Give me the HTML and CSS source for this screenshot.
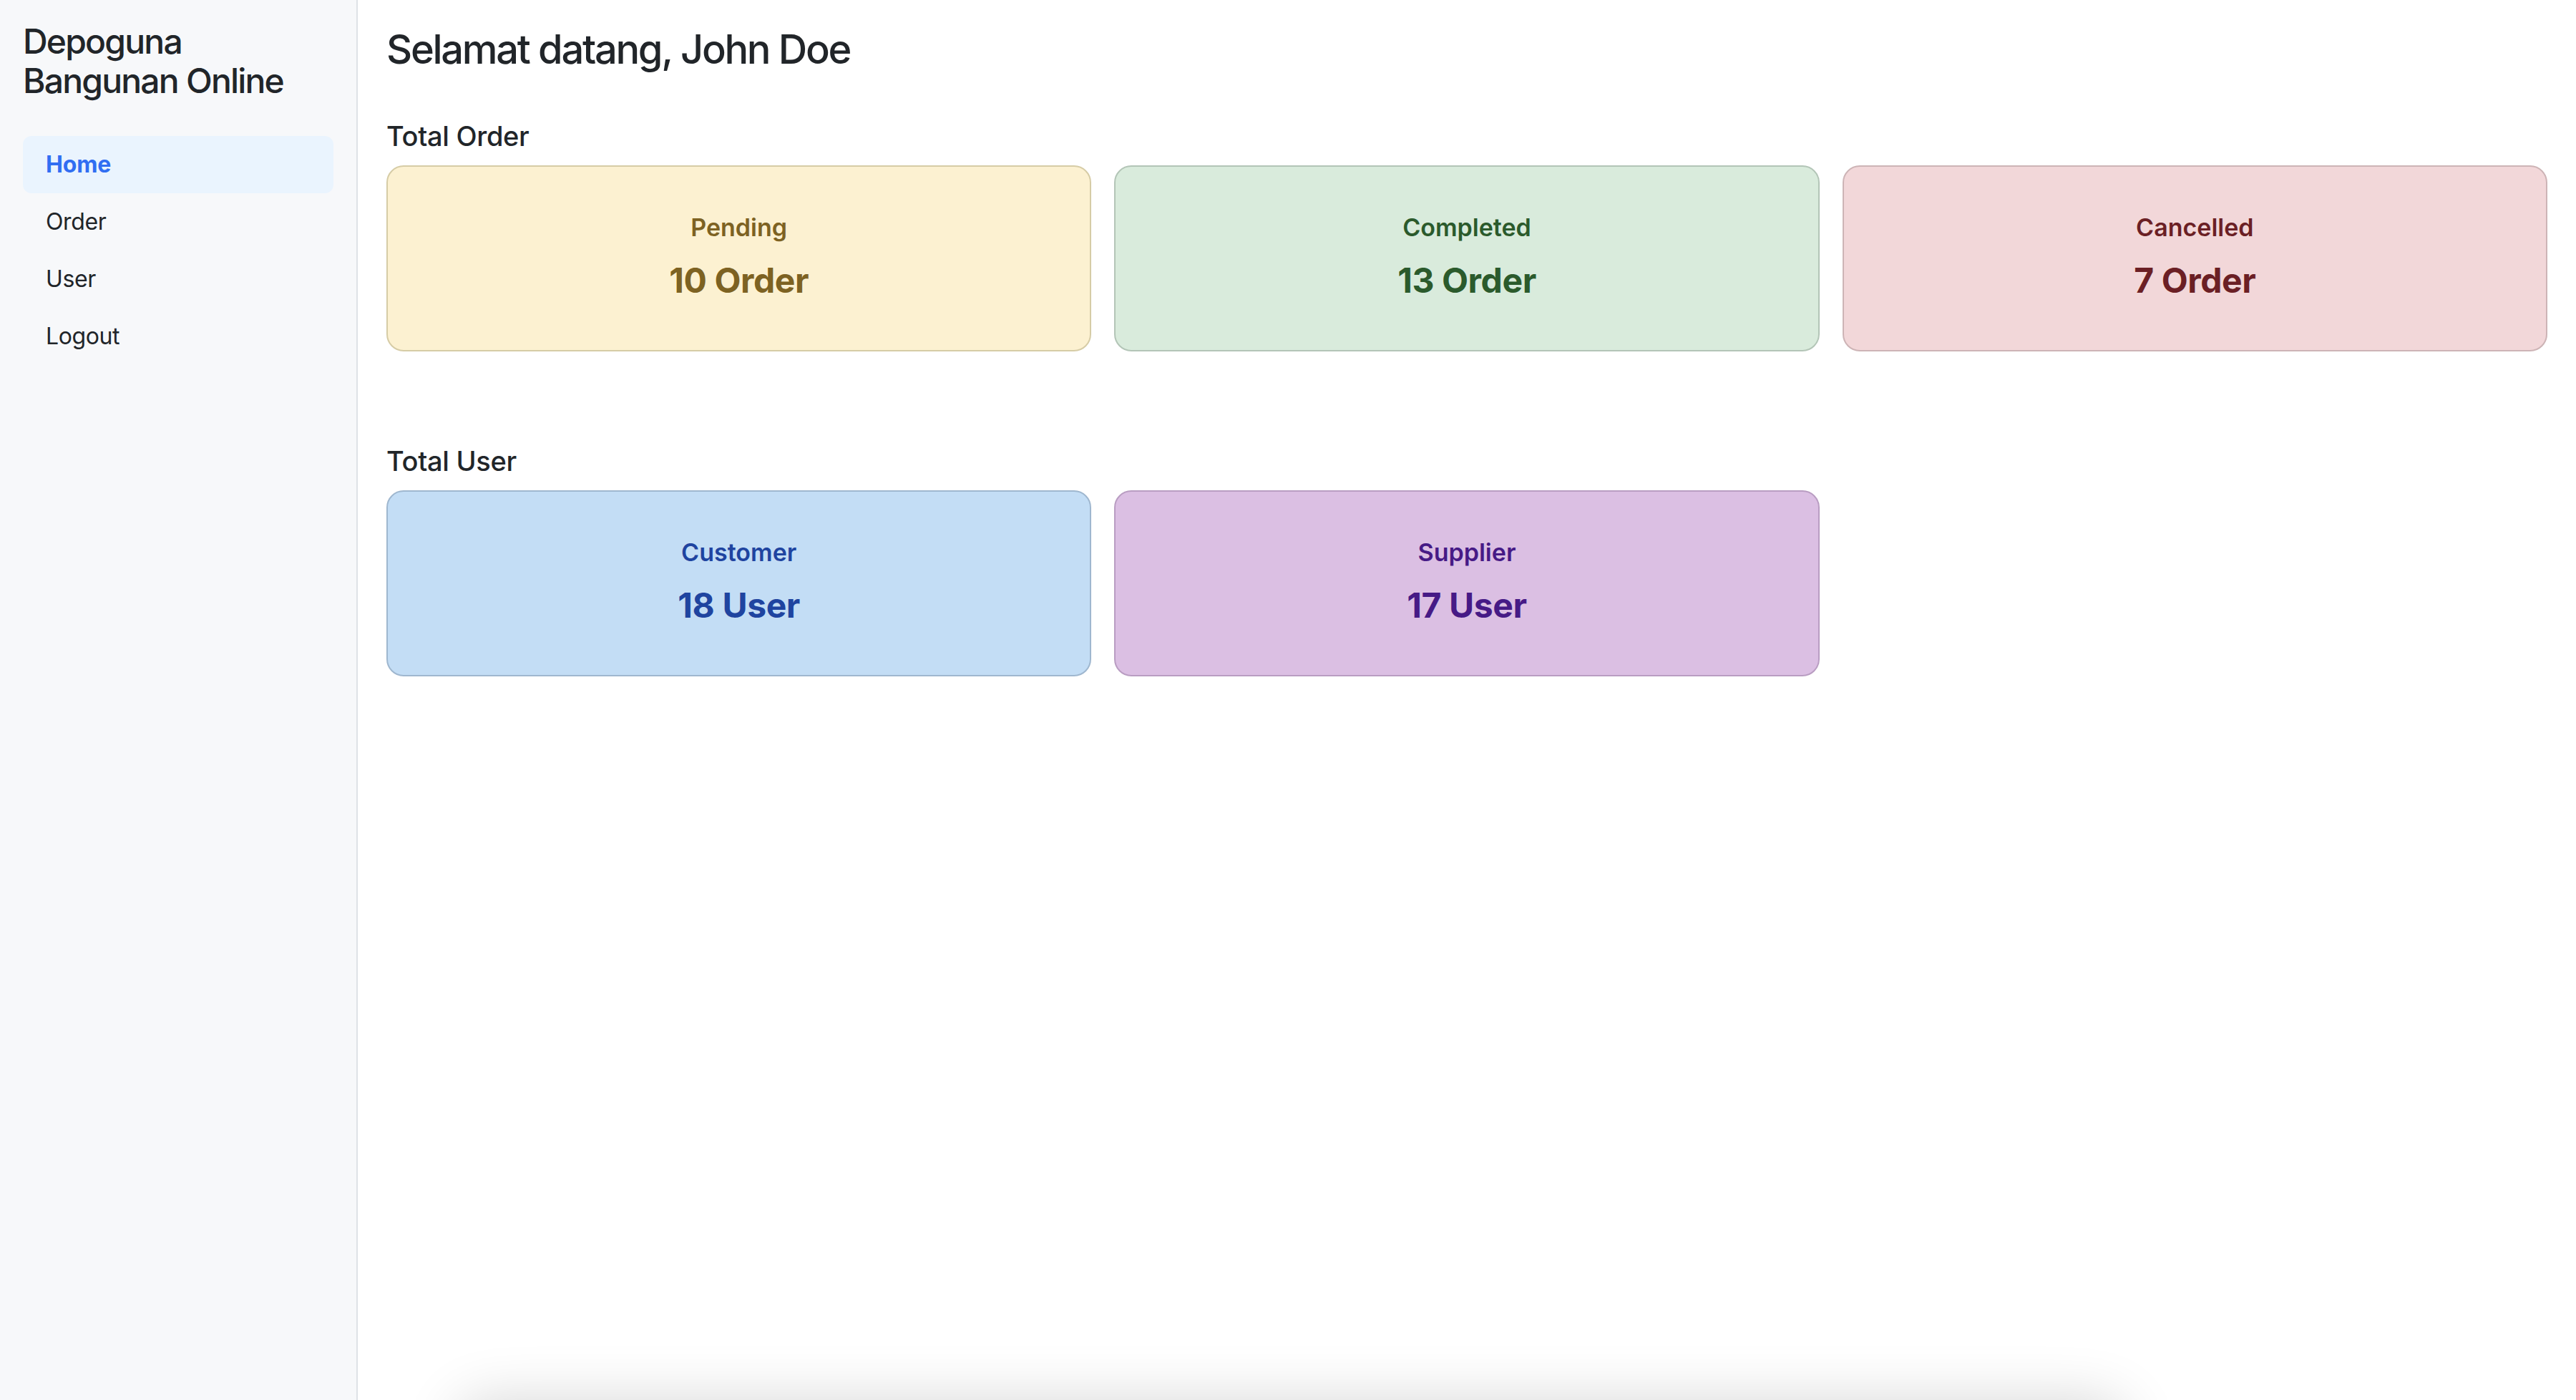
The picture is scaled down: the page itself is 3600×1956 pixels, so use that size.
FILE: index.html
```html
<!DOCTYPE html>
<html lang="id">
<head>
<meta charset="utf-8">
<title>Depoguna Bangunan Online</title>
<link rel="stylesheet" href="styles.css">
</head>
<body>
<div class="layout">
  <aside class="sidebar">
    <h4 class="brand">Depoguna<br>Bangunan Online</h4>
    <nav class="nav">
      <a class="nav-link active" href="#">Home</a>
      <a class="nav-link" href="#">Order</a>
      <a class="nav-link" href="#">User</a>
      <a class="nav-link" href="#">Logout</a>
    </nav>
  </aside>
  <main class="main">
    <h1 class="welcome">Selamat datang, John Doe</h1>

    <section class="section">
      <h5 class="section-title">Total Order</h5>
      <div class="cards">
        <div class="stat stat-warning">
          <div class="stat-label">Pending</div>
          <div class="stat-value">10 Order</div>
        </div>
        <div class="stat stat-success">
          <div class="stat-label">Completed</div>
          <div class="stat-value">13 Order</div>
        </div>
        <div class="stat stat-danger">
          <div class="stat-label">Cancelled</div>
          <div class="stat-value">7 Order</div>
        </div>
      </div>
    </section>

    <section class="section section-users">
      <h5 class="section-title">Total User</h5>
      <div class="cards">
        <div class="stat stat-primary">
          <div class="stat-label">Customer</div>
          <div class="stat-value">18 User</div>
        </div>
        <div class="stat stat-purple">
          <div class="stat-label">Supplier</div>
          <div class="stat-value">17 User</div>
        </div>
      </div>
    </section>
  </main>
</div>
<div class="bottom-sheet"></div>
</body>
</html>
```
FILE: styles.css
```css
* { box-sizing: border-box; }

html, body {
  margin: 0;
  padding: 0;
  height: 100%;
}

body {
  font-family: Inter, "Noto Sans", "Liberation Sans", sans-serif;
  color: #212529;
  background: #ffffff;
  overflow: hidden;
}

.layout {
  display: flex;
  min-height: 100vh;
}

.sidebar {
  width: 500px;
  flex: 0 0 500px;
  background: #f7f8fa;
  border-right: 2px solid #dee2e6;
  padding: 30px 32px;
}

.brand {
  margin: 0 0 50px 0;
  font-size: 48px;
  line-height: 55px;
  font-weight: 500;
  letter-spacing: -1.8px;
  color: #212529;
}

.nav {
  display: flex;
  flex-direction: column;
}

.nav-link {
  display: block;
  height: 80px;
  line-height: 48px;
  padding: 16px 32px;
  font-size: 32px;
  letter-spacing: -0.4px;
  color: #212529;
  text-decoration: none;
  border-radius: 12px;
}

.nav-link.active {
  background: #eaf4fe;
  color: #316ef2;
  font-weight: 700;
  letter-spacing: -0.2px;
}

.main {
  flex: 1;
  padding: 36px 40px;
}

.welcome {
  margin: 0 0 64px 0;
  font-size: 56px;
  line-height: 67px;
  font-weight: 500;
  letter-spacing: -2.3px;
}

.section-title {
  margin: 0 0 18px 0;
  font-size: 38px;
  line-height: 46px;
  font-weight: 500;
  letter-spacing: -0.3px;
}

.section-users {
  margin-top: 130px;
}

.cards {
  display: grid;
  grid-template-columns: repeat(3, 1fr);
  gap: 32px;
}

.stat {
  border: 2px solid;
  border-radius: 24px;
  padding: 61px 16px 69px;
  text-align: center;
}

.stat-label {
  font-size: 34px;
  line-height: 48px;
  font-weight: 600;
  margin-bottom: 21px;
}

.stat-value {
  font-size: 48px;
  line-height: 57px;
  font-weight: 700;
  letter-spacing: -0.4px;
}

.stat-warning { background: #fcf1d1; border-color: #d6cca6; color: #7d6222; }
.stat-success { background: #d9ebdc; border-color: #b3c5b7; color: #2b5a2c; }
.stat-danger  { background: #f2d7d9; border-color: #cdb4b6; color: #6b1f25; }
.stat-primary { background: #c3ddf5; border-color: #9fb7cf; color: #1f44a0; }
.stat-purple  { background: #dbbfe3; border-color: #b99dc2; color: #461a86; }

.bottom-sheet {
  position: fixed;
  left: 640px;
  width: 2330px;
  bottom: -300px;
  height: 300px;
  background: #ffffff;
  border-radius: 40px;
  box-shadow: 0 0 80px rgba(0, 0, 0, 0.16);
}
```
